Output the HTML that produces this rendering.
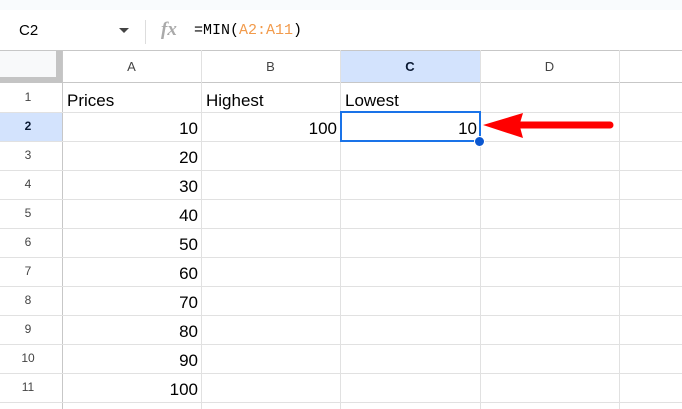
<!DOCTYPE html>
<html><head><style>
*{margin:0;padding:0;box-sizing:border-box}
body{width:682px;height:409px;overflow:hidden;background:#fff;font-family:"Liberation Sans",Arial,sans-serif;position:relative}
.a{position:absolute}
.hl{position:absolute;height:1px;background:#e1e1e1}
.vl{position:absolute;width:1px;background:#e1e1e1}
.rn{position:absolute;left:0;width:56px;text-align:center;font-size:12px;color:#444;line-height:29px}
.cv{position:absolute;font-size:17px;color:#000;line-height:29px}
.ch{position:absolute;top:51px;height:32px;line-height:32px;text-align:center;font-size:13px;color:#444}
</style></head><body>
<div class="a" style="left:0;top:0;width:682px;height:10px;background:#f9fbfd"></div>
<div class="a" style="left:19px;top:22px;font-size:15px;color:#000">C2</div>
<div class="a" style="left:119px;top:28px;width:0;height:0;border-left:5px solid transparent;border-right:5px solid transparent;border-top:5px solid #444"></div>
<div class="a" style="left:145px;top:20px;width:1px;height:24px;background:#ddd"></div>
<div class="a" style="left:161px;top:19px;font-family:'Liberation Serif',serif;font-style:italic;font-size:19px;color:#aaa;font-weight:bold">fx</div>
<div class="a" style="left:194px;top:22px;font-family:'Liberation Mono',monospace;font-size:15px;color:#000">=MIN(<span style="color:#f29b4c">A2:A11</span>)</div>
<div class="hl" style="left:0;top:50px;width:682px;background:#c7c7c7"></div>
<div class="a" style="left:0;top:51px;width:62px;height:32px;background:#f8f9fa"></div>
<div class="a" style="left:56px;top:51px;width:6px;height:32px;background:#c4c4c4"></div>
<div class="a" style="left:0;top:77px;width:62px;height:6px;background:#c4c4c4"></div>
<div class="a" style="left:340px;top:51px;width:140px;height:32px;background:#d3e3fd"></div>
<div class="ch" style="left:62px;width:139px">A</div>
<div class="ch" style="left:201px;width:139px">B</div>
<div class="ch" style="left:340px;width:140px;font-weight:bold;color:#0b1a33">C</div>
<div class="ch" style="left:480px;width:139px">D</div>
<div class="hl" style="left:62px;top:82px;width:620px;background:#c7c7c7"></div>
<div class="a" style="left:0;top:83px;width:62px;height:326px;background:#fff"></div>
<div class="a" style="left:0;top:112px;width:62px;height:29px;background:#d3e3fd"></div>
<div class="vl" style="left:62px;top:50px;height:359px;background:#c7c7c7"></div>
<div class="vl" style="left:201px;top:50px;height:359px"></div>
<div class="vl" style="left:340px;top:50px;height:359px"></div>
<div class="vl" style="left:480px;top:50px;height:359px"></div>
<div class="vl" style="left:619px;top:50px;height:359px"></div>
<div class="hl" style="left:0;top:112px;width:682px"></div>
<div class="hl" style="left:0;top:141px;width:682px"></div>
<div class="hl" style="left:0;top:170px;width:682px"></div>
<div class="hl" style="left:0;top:199px;width:682px"></div>
<div class="hl" style="left:0;top:228px;width:682px"></div>
<div class="hl" style="left:0;top:257px;width:682px"></div>
<div class="hl" style="left:0;top:286px;width:682px"></div>
<div class="hl" style="left:0;top:315px;width:682px"></div>
<div class="hl" style="left:0;top:344px;width:682px"></div>
<div class="hl" style="left:0;top:373px;width:682px"></div>
<div class="hl" style="left:0;top:402px;width:682px"></div>
<div class="rn" style="top:83px">1</div>
<div class="rn" style="top:112px;font-weight:bold;color:#0b1a33">2</div>
<div class="rn" style="top:141px">3</div>
<div class="rn" style="top:170px">4</div>
<div class="rn" style="top:199px">5</div>
<div class="rn" style="top:228px">6</div>
<div class="rn" style="top:257px">7</div>
<div class="rn" style="top:286px">8</div>
<div class="rn" style="top:315px">9</div>
<div class="rn" style="top:344px">10</div>
<div class="rn" style="top:373px">11</div>
<div class="cv" style="left:67px;top:86px">Prices</div>
<div class="cv" style="left:206px;top:86px">Highest</div>
<div class="cv" style="left:345px;top:86px">Lowest</div>
<div class="cv" style="right:484px;top:114px">10</div>
<div class="cv" style="right:484px;top:143px">20</div>
<div class="cv" style="right:484px;top:172px">30</div>
<div class="cv" style="right:484px;top:201px">40</div>
<div class="cv" style="right:484px;top:230px">50</div>
<div class="cv" style="right:484px;top:259px">60</div>
<div class="cv" style="right:484px;top:288px">70</div>
<div class="cv" style="right:484px;top:317px">80</div>
<div class="cv" style="right:484px;top:346px">90</div>
<div class="cv" style="right:484px;top:375px">100</div>
<div class="cv" style="right:345px;top:114px">100</div>
<div class="cv" style="right:205px;top:114px">10</div>
<div class="a" style="left:340px;top:111px;width:141px;height:31px;border:2px solid #1a73e8"></div>
<div class="a" style="left:474px;top:136px;width:11px;height:11px;border-radius:50%;background:#0b57d0;border:1px solid #fff"></div>
<svg class="a" style="left:480px;top:110px" width="140" height="32">
<polygon points="3,15 43,3 40,13 130,11.5 133,15 130,18.5 40,17 43,28" fill="#f00"/>
<line x1="40" y1="15" x2="130" y2="15" stroke="#f00" stroke-width="7" stroke-linecap="round"/>
</svg>
</body></html>
